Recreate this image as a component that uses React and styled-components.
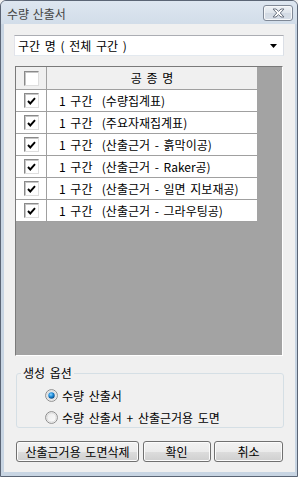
import React from "react";
import styled, { createGlobalStyle } from "styled-components";

const GlobalStyle = createGlobalStyle`
  html, body { margin: 0; padding: 0; background: #f0f0f0; }
  body {
    font-family: "Noto Sans CJK KR", "Noto Sans", sans-serif;
    font-size: 12px;
    word-spacing: 2px;
    color: #000;
  }
`;

const rows = [
  "1 구간  (수량집계표)",
  "1 구간  (주요자재집계표)",
  "1 구간  (산출근거 - 흙막이공)",
  "1 구간  (산출근거 - Raker공)",
  "1 구간  (산출근거 - 일면 지보재공)",
  "1 구간  (산출근거 - 그라우팅공)",
];

const Window = styled.div`
  box-sizing: border-box;
  width: 298px;
  height: 477px;
  display: flex;
  flex-direction: column;
  border: 1px solid #5b6575;
  border-radius: 6px 6px 0 0;
  background: #c8d5e3;
  overflow: hidden;
`;

const TitleBar = styled.div`
  height: 23px;
  flex: none;
  display: flex;
  align-items: flex-start;
  justify-content: space-between;
  padding: 0 4px 0 6px;
  background: linear-gradient(#dde6f0, #d2dde9);
`;

const Title = styled.div`
  line-height: 25px;
  word-spacing: 1px;
  color: #444;
`;

const CloseButton = styled.div`
  box-sizing: border-box;
  margin-top: 4px;
  width: 30px;
  height: 16px;
  border: 1px solid #7f8896;
  border-radius: 3px;
  background: linear-gradient(#eef2f6, #dfe5ec 50%, #d2dae4 51%, #d8dfe8);
  box-shadow: inset 0 0 0 1px #f6f8fa;
  display: flex;
  align-items: center;
  justify-content: center;
`;

const Client = styled.div`
  flex: 1;
  margin: 0 2px 4px 3px;
  background: #f0f0f0;
  padding: 11px 11px 0 10px;
  display: flex;
  flex-direction: column;
`;

const Combo = styled.div`
  box-sizing: border-box;
  height: 21px;
  display: flex;
  align-items: center;
  justify-content: space-between;
  padding: 0 6px 0 3px;
  background: #fff;
  border: 1px solid;
  border-color: #abadb3 #dbdfe6 #e3e9ef #e2e3ea;
  line-height: 19px;
  white-space: pre;
`;

const Grid = styled.div`
  box-sizing: border-box;
  margin: 10px 1px 0 1px;
  height: 290px;
  border: 1px solid;
  border-color: #7a7a7a #ffffff #ffffff #7a7a7a;
  background: #a3a3a3;
  display: flex;
  flex-direction: column;
  align-items: flex-start;
`;

const Row = styled.div`
  box-sizing: border-box;
  display: flex;
  width: 241px;
  height: ${(p) => (p.$header ? 23 : 22)}px;
  background: ${(p) => (p.$header ? "#f0f0f0" : "#fff")};
  border-bottom: 1px solid #a0a0a0;
`;

const CheckCell = styled.div`
  box-sizing: border-box;
  width: 31px;
  flex: none;
  border-right: 1px solid #a0a0a0;
  display: flex;
  align-items: center;
  justify-content: center;
`;

const TextCell = styled.div`
  flex: 1;
  display: flex;
  align-items: center;
  justify-content: ${(p) => (p.$center ? "center" : "flex-start")};
  padding-left: ${(p) => (p.$center ? 0 : 12)}px;
  white-space: pre;
  line-height: 20px;
`;

const Box = styled.div`
  box-sizing: border-box;
  width: 15px;
  height: 15px;
  border: 1px solid;
  border-color: #8a8a8a #dedede #dedede #8a8a8a;
  box-shadow: inset 1px 1px 0 #c6c6c6;
  background: #fff;
  display: flex;
  align-items: center;
  justify-content: center;
`;

const Group = styled.fieldset`
  box-sizing: border-box;
  margin: 10px 0 0 2px;
  width: 268px;
  padding: 6px 0 1px 0;
  border: 1px solid #d5dfe5;
  border-radius: 3px;
  display: flex;
  flex-direction: column;
  gap: 4px;
`;

const Legend = styled.legend`
  margin-left: 4px;
  padding: 0 2px;
  line-height: 14px;
`;

const RadioRow = styled.label`
  height: 18px;
  margin-left: 28px;
  display: flex;
  align-items: center;
  gap: 4px;
  white-space: pre;
`;

const Buttons = styled.div`
  margin: 13px 1px 0 2px;
  display: flex;
  justify-content: space-between;
`;

const Button = styled.div`
  box-sizing: border-box;
  width: ${(p) => p.$w}px;
  height: 21px;
  border: 1px solid #707070;
  border-radius: 3px;
  background: linear-gradient(#f2f2f2, #ebebeb 50%, #dddddd 51%, #cfcfcf);
  box-shadow: inset 0 0 0 1px #fbfbfb;
  display: flex;
  align-items: center;
  justify-content: center;
  line-height: 19px;
  white-space: pre;
`;

const Check = ({ on }) => (
  <Box>
    {on && (
      <svg width="9" height="8" viewBox="0 0 9 8">
        <path d="M1 4 L3.3 6.5 L8 1.2" fill="none" stroke="#000" strokeWidth="1.9" />
      </svg>
    )}
  </Box>
);

const Radio = ({ on }) => (
  <svg width="13" height="13" viewBox="0 0 13 13">
    <defs>
      <linearGradient id="rbg" x1="0" y1="0" x2="1" y2="1">
        <stop offset="0" stopColor="#e8e8e8" />
        <stop offset="1" stopColor="#ffffff" />
      </linearGradient>
      <radialGradient id="rdot" cx="0.4" cy="0.35" r="0.7">
        <stop offset="0" stopColor="#8fd4ff" />
        <stop offset="0.5" stopColor="#1a8ad8" />
        <stop offset="1" stopColor="#0a3f75" />
      </radialGradient>
    </defs>
    <circle cx="6.5" cy="6.5" r="5.9" fill="url(#rbg)" stroke="#8b8b8b" strokeWidth="1" />
    <circle cx="6.5" cy="6.5" r="4.6" fill="none" stroke="#d4d4d4" strokeWidth="0.8" />
    {on && <circle cx="6.5" cy="6.5" r="3.2" fill="url(#rdot)" />}
  </svg>
);

export default function App() {
  return (
    <>
      <GlobalStyle />
      <Window>
        <TitleBar>
          <Title>수량 산출서</Title>
          <CloseButton>
            <svg width="13" height="10" viewBox="0 0 13 10">
              <path
                d="M1 1 H4 L6.5 3.3 L9 1 H12 L8.3 5 L12 9 H9 L6.5 6.7 L4 9 H1 L4.7 5 Z"
                fill="#fdfdfd"
                stroke="#6a7280"
                strokeWidth="1"
                strokeLinejoin="round"
              />
            </svg>
          </CloseButton>
        </TitleBar>
        <Client>
          <Combo>
            <span>구간 명 ( 전체 구간 )</span>
            <svg width="7" height="4" viewBox="0 0 7 4">
              <path d="M0 0 H7 L3.5 4 Z" fill="#000" />
            </svg>
          </Combo>
          <Grid>
            <Row $header>
              <CheckCell>
                <Check on={false} />
              </CheckCell>
              <TextCell $center>공 종 명</TextCell>
            </Row>
            {rows.map((r) => (
              <Row key={r}>
                <CheckCell>
                  <Check on />
                </CheckCell>
                <TextCell>{r}</TextCell>
              </Row>
            ))}
          </Grid>
          <Group>
            <Legend>생성 옵션</Legend>
            <RadioRow>
              <Radio on />
              <span>수량 산출서</span>
            </RadioRow>
            <RadioRow>
              <Radio on={false} />
              <span>수량 산출서 + 산출근거용 도면</span>
            </RadioRow>
          </Group>
          <Buttons>
            <Button $w={123}>산출근거용 도면삭제</Button>
            <Button $w={68}>확인</Button>
            <Button $w={69}>취소</Button>
          </Buttons>
        </Client>
      </Window>
    </>
  );
}
